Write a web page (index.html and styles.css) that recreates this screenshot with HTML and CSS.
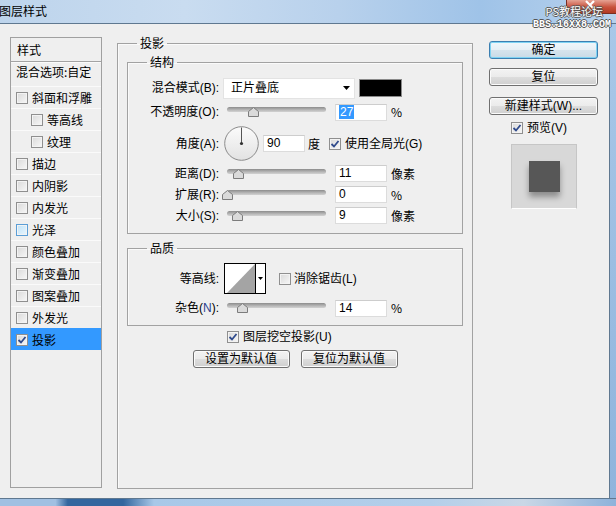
FILE: index.html
```html
<!DOCTYPE html>
<html lang="zh-CN">
<head>
<meta charset="utf-8">
<title>图层样式</title>
<link rel="stylesheet" href="styles.css">
</head>
<body>
<div class="window">
  <header class="titlebar">
    <span class="title">图层样式</span>
    <div class="closebtn"><svg width="12" height="10" viewBox="0 0 12 10"><path d="M2 1 L10 9 M10 1 L2 9" stroke="#fff" stroke-width="2.2"/></svg></div>
    <div class="watermark"><span class="wm1">PS教程论坛</span><span class="wm2">BBS.16XX8.COM</span></div>
  </header>
  <div class="client">
    <div class="dialog">
      <div class="style-list">
        <div class="sl-head">样式</div>
        <div class="sl-blend">混合选项:自定</div>
        <div class="sl-item"><span class="cb"></span>斜面和浮雕</div>
        <div class="sl-item indent"><span class="cb"></span>等高线</div>
        <div class="sl-item indent"><span class="cb"></span>纹理</div>
        <div class="sl-item"><span class="cb"></span>描边</div>
        <div class="sl-item"><span class="cb"></span>内阴影</div>
        <div class="sl-item"><span class="cb"></span>内发光</div>
        <div class="sl-item"><span class="cb hover"></span>光泽</div>
        <div class="sl-item"><span class="cb"></span>颜色叠加</div>
        <div class="sl-item"><span class="cb"></span>渐变叠加</div>
        <div class="sl-item"><span class="cb"></span>图案叠加</div>
        <div class="sl-item"><span class="cb"></span>外发光</div>
        <div class="sl-item active"><span class="cb"><svg width="10" height="10" viewBox="0 0 10 10"><path d="M1.5 5 L4 7.5 L8.5 2" fill="none" stroke="#2f4a8c" stroke-width="1.8"/></svg></span>投影</div>
      </div>

      <fieldset class="grp grp-outer">
        <legend>投影</legend>
        <fieldset class="grp grp-inner">
          <legend>结构</legend>
          <div class="row r-blend">
            <span class="lbl">混合模式(B):</span>
            <div class="select"><span>正片叠底</span><svg width="7" height="4" viewBox="0 0 7 4"><path d="M0 0 H7 L3.5 4 Z" fill="#000"/></svg></div>
            <span class="swatch"></span>
          </div>
          <div class="row r-opac">
            <span class="lbl">不透明度(O):</span>
            <div class="slider"><div class="track"></div><svg class="thumb" style="left:21px" width="11" height="10" viewBox="0 0 11 10"><path d="M0.5 9.5V4.5L5.5 0.5L10.5 4.5V9.5Z" fill="#dadada" stroke="#7c7c7c"/></svg></div>
            <span class="num"><span class="sel">27</span></span>
            <span class="unit">%</span>
          </div>
          <div class="row r-angle">
            <span class="lbl">角度(A):</span>
            <svg class="dial" width="35" height="35" viewBox="0 0 35 35">
              <defs><linearGradient id="dg" x1="0" y1="0" x2="0" y2="1"><stop offset="0" stop-color="#fbfbfb"/><stop offset="1" stop-color="#e2e2e2"/></linearGradient></defs>
              <circle cx="17.5" cy="17.5" r="16.8" fill="url(#dg)" stroke="#8b8b8b"/>
              <line x1="17.5" y1="17.5" x2="17.5" y2="1.5" stroke="#555" stroke-width="1"/>
              <circle cx="17.5" cy="17.5" r="1.6" fill="#333"/>
            </svg>
            <span class="num num-angle">90</span>
            <span class="unit deg">度</span>
            <span class="cb"><svg width="10" height="10" viewBox="0 0 10 10"><path d="M1.5 5 L4 7.5 L8.5 2" fill="none" stroke="#2f4a8c" stroke-width="1.8"/></svg></span>
            <span class="cb-text">使用全局光(G)</span>
          </div>
          <div class="row r-s">
            <span class="lbl">距离(D):</span>
            <div class="slider"><div class="track"></div><svg class="thumb" style="left:6px" width="11" height="10" viewBox="0 0 11 10"><path d="M0.5 9.5V4.5L5.5 0.5L10.5 4.5V9.5Z" fill="#dadada" stroke="#7c7c7c"/></svg></div>
            <span class="num">11</span>
            <span class="unit">像素</span>
          </div>
          <div class="row r-s">
            <span class="lbl">扩展(R):</span>
            <div class="slider"><div class="track"></div><svg class="thumb" style="left:-5px" width="11" height="10" viewBox="0 0 11 10"><path d="M0.5 9.5V4.5L5.5 0.5L10.5 4.5V9.5Z" fill="#dadada" stroke="#7c7c7c"/></svg></div>
            <span class="num">0</span>
            <span class="unit">%</span>
          </div>
          <div class="row r-s">
            <span class="lbl">大小(S):</span>
            <div class="slider"><div class="track"></div><svg class="thumb" style="left:5px" width="11" height="10" viewBox="0 0 11 10"><path d="M0.5 9.5V4.5L5.5 0.5L10.5 4.5V9.5Z" fill="#dadada" stroke="#7c7c7c"/></svg></div>
            <span class="num">9</span>
            <span class="unit">像素</span>
          </div>
        </fieldset>

        <fieldset class="grp grp-inner grp-quality">
          <legend>品质</legend>
          <div class="row r-contour">
            <span class="lbl">等高线:</span>
            <div class="contour">
              <svg width="30" height="29" viewBox="0 0 30 29"><rect width="30" height="29" fill="#fff"/><path d="M2 29 L30 0 V29 Z" fill="#a4a4a4"/></svg>
              <span class="contour-drop"><svg width="5" height="3" viewBox="0 0 5 3"><path d="M0 0 H5 L2.5 3 Z" fill="#000"/></svg></span>
            </div>
            <span class="cb"></span>
            <span class="cb-text">消除锯齿(L)</span>
          </div>
          <div class="row r-noise">
            <span class="lbl">杂色(<span class="ul">N</span>):</span>
            <div class="slider"><div class="track"></div><svg class="thumb" style="left:10px" width="11" height="10" viewBox="0 0 11 10"><path d="M0.5 9.5V4.5L5.5 0.5L10.5 4.5V9.5Z" fill="#dadada" stroke="#7c7c7c"/></svg></div>
            <span class="num">14</span>
            <span class="unit">%</span>
          </div>
        </fieldset>

        <div class="knock">
          <span class="cb"><svg width="10" height="10" viewBox="0 0 10 10"><path d="M1.5 5 L4 7.5 L8.5 2" fill="none" stroke="#2f4a8c" stroke-width="1.8"/></svg></span>
          <span class="cb-text">图层挖空投影(U)</span>
        </div>
        <div class="btnrow">
          <span class="btn">设置为默认值</span>
          <span class="btn">复位为默认值</span>
        </div>
      </fieldset>

      <div class="actions">
        <span class="btn btn-wide default">确定</span>
        <span class="btn btn-wide b2">复位</span>
        <span class="btn btn-wide b3">新建样式(W)...</span>
        <div class="preview-check">
          <span class="cb"><svg width="10" height="10" viewBox="0 0 10 10"><path d="M1.5 5 L4 7.5 L8.5 2" fill="none" stroke="#2f4a8c" stroke-width="1.8"/></svg></span>
          <span class="cb-text">预览(V)</span>
        </div>
        <div class="preview"><span class="sq"></span></div>
      </div>
    </div>
    <div class="frame-right"></div>
  </div>
  <div class="frame-bottom"></div>
</div>
</body>
</html>
```

FILE: styles.css
```css
html, body {
  margin: 0;
  padding: 0;
}
body {
  width: 616px;
  height: 506px;
  overflow: hidden;
  font: 12px/14px "Liberation Sans", "Noto Sans CJK SC", sans-serif;
  color: #000;
  background: #efefef;
}
.window {
  width: 616px;
  height: 506px;
  display: flex;
  flex-direction: column;
}
.titlebar {
  position: relative;
  flex: none;
  height: 23px;
  border-bottom: 1px solid #5f7890;
  background: linear-gradient(to right, #bdd4ec 0%, #c9dcf0 30%, #b8d1ec 55%, #9fc3e8 78%, #b7d1ec 100%);
}
.title {
  display: block;
  margin-left: -1px;
  line-height: 22px;
  font-size: 12px;
  font-family: "Noto Sans CJK SC", sans-serif;
}
.closebtn {
  position: absolute;
  right: -6px;
  top: 0;
  width: 56px;
  height: 14px;
  border-radius: 0 0 4px 4px;
  background: linear-gradient(#e5a293, #c8513c 55%, #b23a24);
  border: 1px solid #7a2d22;
  border-top: none;
  display: flex;
  justify-content: center;
  align-items: flex-start;
  padding-right: 8px;
  box-sizing: border-box;
}
.watermark {
  position: absolute;
  right: 5px;
  top: 5px;
  display: flex;
  flex-direction: column;
  align-items: flex-end;
  gap: 3px;
  color: #fff;
  text-shadow: 1px 0 0 #555, -1px 0 0 #555, 0 1px 0 #555, 0 -1px 0 #555;
}
.wm1 {
  font-family: "Noto Sans CJK SC", sans-serif;
  font-size: 11px;
  line-height: 12px;
  margin-right: 8px;
}
.wm2 {
  font-family: "Liberation Mono", monospace;
  font-size: 10px;
  line-height: 10px;
  font-weight: bold;
}
.client {
  flex: none;
  height: 474px;
  display: flex;
}
.dialog {
  width: 609px;
  border-right: 1px solid #5f7890;
  background: #efefef;
  display: flex;
  align-items: flex-start;
}
.frame-right {
  flex: 1;
  background: linear-gradient(#a9c8e8, #8fb4dc);
}
.frame-bottom {
  flex: none;
  height: 7px;
  border-top: 1px solid #5f7890;
  background: linear-gradient(to right, #a0c0e2 0%, #a0c0e2 9%, #33669e 11%, #33669e 20%, #a8c8e8 25%, #b4cfea 70%, #c9d7e6 85%, #8db2da 100%);
}

/* checkboxes */
.cb {
  flex: none;
  width: 12px;
  height: 12px;
  box-sizing: border-box;
  border: 1px solid #8f8f8f;
  background: linear-gradient(135deg, #d9d9d9, #f7f7f7);
  box-shadow: inset 0 0 0 1px #f3f3f3;
  display: flex;
  align-items: center;
  justify-content: center;
}
.cb.hover {
  border-color: #5b9ed6;
  background: linear-gradient(135deg, #bfe2f8, #eaf6fd);
}

/* left style list */
.style-list {
  flex: none;
  margin: 13px 0 0 10px;
  width: 92px;
  height: 451px;
  box-sizing: border-box;
  border: 1px solid #a0a0a0;
  font-family: "Noto Sans CJK SC", sans-serif;
}
.sl-head {
  height: 23px;
  border-bottom: 1px solid #a3a3a3;
  padding-left: 6px;
  display: flex;
  align-items: center;
}
.sl-blend {
  height: 18px;
  padding: 0 0 5px 5px;
  border-top: 1px solid #fafafa;
  display: flex;
  align-items: center;
}
.sl-item {
  height: 21px;
  border-top: 1px solid #fafafa;
  display: flex;
  align-items: center;
  padding-left: 5px;
  gap: 4px;
}
.sl-item.indent {
  padding-left: 20px;
}
.sl-item.active {
  background: #3399ff;
  border-top-color: #3399ff;
}

/* group boxes */
.grp {
  margin: 0;
  min-width: 0;
  box-sizing: border-box;
  border: 1px solid #a2a2a2;
  box-shadow: inset 1px 1px 0 #fafafa;
}
.grp > legend {
  padding: 0 3px;
  height: 14px;
  line-height: 14px;
  font-family: "Noto Sans CJK SC", sans-serif;
}
.grp-outer {
  flex: none;
  margin: 12px 0 0 15px;
  width: 356px;
  height: 453px;
  padding: 5px 9px 0;
}
.grp-outer > legend {
  margin-left: 10px;
}
.grp-inner {
  padding: 8px 0 7px;
}
.grp-inner > legend {
  margin-left: 19px;
}
.grp-quality {
  margin-top: 7px;
  padding-bottom: 6px;
}

.row {
  display: flex;
  align-items: center;
  height: 22px;
}
.r-blend {
  margin-bottom: 2px;
}
.r-angle {
  height: 39px;
  margin-top: 1px;
}
.r-s {
  height: 21px;
}
.r-contour {
  height: 31px;
}
.r-noise {
  margin-top: 3px;
}
.lbl {
  flex: none;
  width: 91px;
  text-align: right;
  white-space: nowrap;
}
.ul {
  color: #2a3f8f;
}
.select {
  flex: none;
  margin-left: 4px;
  width: 132px;
  height: 21px;
  box-sizing: border-box;
  background: #fff;
  border: 1px solid #e3e3e3;
  display: flex;
  align-items: center;
  justify-content: space-between;
  padding: 0 4px 0 7px;
}
.swatch {
  flex: none;
  margin-left: 4px;
  width: 43px;
  height: 18px;
  box-sizing: border-box;
  border: 1px solid #8a8a8a;
  background: #000;
}
.slider {
  flex: none;
  position: relative;
  margin-left: 8px;
  width: 99px;
  height: 14px;
}
.track {
  margin-top: 2px;
  height: 5px;
  border-radius: 3px;
  background: linear-gradient(#8c8c8c, #b9b9b9 60%, #d2d2d2);
}
.thumb {
  position: absolute;
  top: 2px;
}
.num {
  flex: none;
  margin-left: 9px;
  width: 52px;
  height: 17px;
  box-sizing: border-box;
  background: #fff;
  border: 1px solid #dcdcdc;
  border-top-color: #cdcdcd;
  padding-left: 3px;
  line-height: 15px;
  font-size: 12px;
}
.sel {
  background: #3399ff;
  color: #fff;
  padding: 0 1px;
}
.unit {
  flex: none;
  margin-left: 4px;
  font-family: "Noto Sans CJK SC", sans-serif;
}
.dial {
  flex: none;
  margin-left: 5px;
}
.num-angle {
  margin-left: 4px;
  width: 42px;
}
.unit.deg {
  margin-left: 3px;
}
.r-angle .cb {
  margin-left: 9px;
}
.cb-text {
  margin-left: 4px;
  white-space: nowrap;
}
.contour {
  flex: none;
  margin-left: 5px;
  display: flex;
  border: 1px solid #000;
  height: 31px;
  box-sizing: border-box;
}
.contour svg {
  display: block;
}
.contour-drop {
  width: 9px;
  border-left: 1px solid #000;
  background: #fff;
  display: flex;
  align-items: center;
  justify-content: center;
}
.r-contour .cb {
  margin-left: 13px;
}
.r-contour .cb-text {
  margin-left: 3px;
}
.knock {
  display: flex;
  align-items: center;
  height: 14px;
  margin-top: 4px;
  padding-left: 100px;
}
.btnrow {
  display: flex;
  justify-content: center;
  gap: 11px;
  margin-top: 6px;
}
.btn {
  flex: none;
  box-sizing: border-box;
  width: 97px;
  height: 18px;
  border: 1px solid #707070;
  border-radius: 3px;
  background: linear-gradient(#f3f3f3 0%, #ebebeb 50%, #dddddd 51%, #cfcfcf 100%);
  box-shadow: inset 0 0 0 1px #fbfbfb;
  display: flex;
  align-items: center;
  justify-content: center;
  white-space: nowrap;
  font-size: 12px;
}

/* right column */
.actions {
  flex: none;
  margin: 17px 0 0 16px;
  width: 109px;
  display: flex;
  flex-direction: column;
}
.btn-wide {
  width: 109px;
}
.btn.default {
  border-color: #3c7fb1;
  box-shadow: inset 0 0 0 1px #7fd3f3;
  background: linear-gradient(#f1f7fb 0%, #e6eff5 50%, #d6e4ed 51%, #c9dae6 100%);
}
.b2 {
  margin-top: 9px;
}
.b3 {
  margin-top: 11px;
}
.preview-check {
  display: flex;
  align-items: center;
  height: 12px;
  margin-top: 7px;
  padding-left: 22px;
}
.preview {
  margin: 10px 0 0 22px;
  width: 66px;
  height: 65px;
  box-sizing: border-box;
  border: 1px solid #c6c6c6;
  border-bottom-color: #fff;
  background: #d8d8d8;
  display: flex;
  align-items: center;
  justify-content: center;
  padding-bottom: 1px;
}
.sq {
  width: 31px;
  height: 31px;
  background: #575757;
  box-shadow: 0 5px 6px rgba(0, 0, 0, 0.35);
}
```
